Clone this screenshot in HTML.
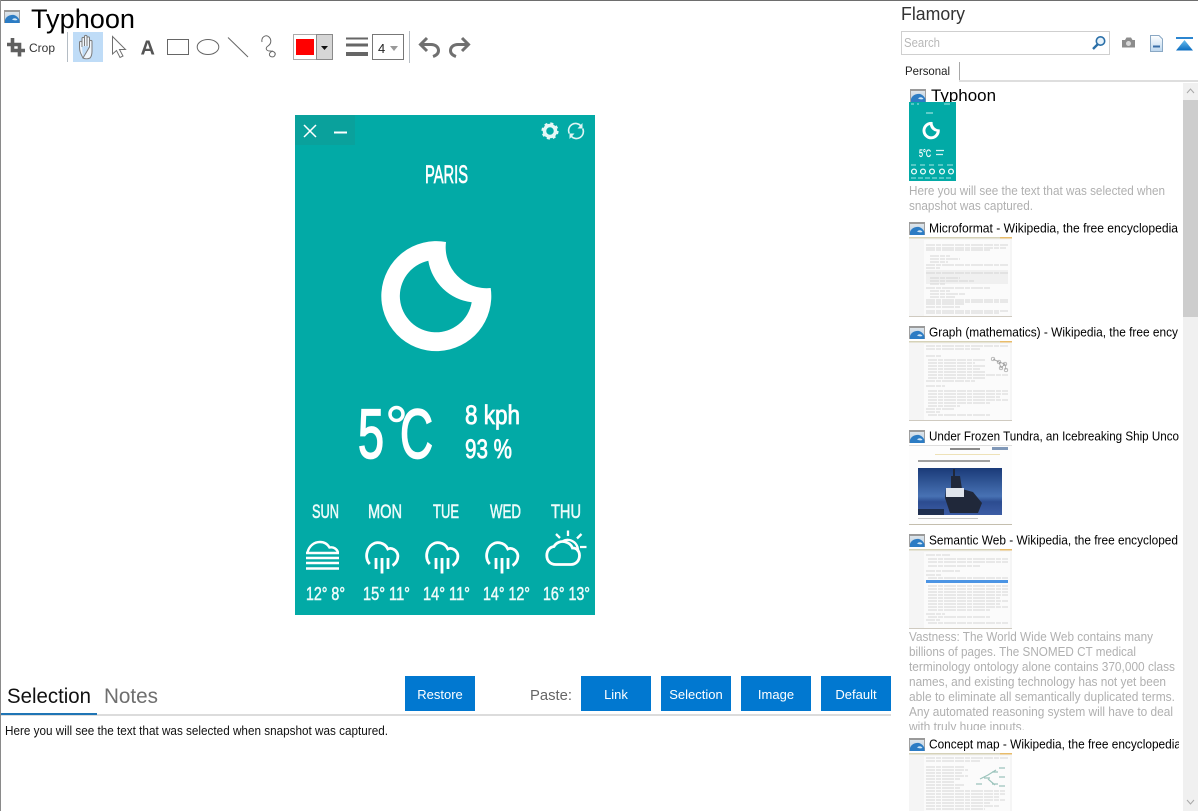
<!DOCTYPE html>
<html lang="en">
<head>
<meta charset="utf-8">
<title>Typhoon - Flamory</title>
<style>
html,body{margin:0;padding:0;background:#fff;width:1198px;height:811px;overflow:hidden}
svg{display:block;font-family:"Liberation Sans",sans-serif}
</style>
</head>
<body>
<svg xmlns="http://www.w3.org/2000/svg" width="1198" height="811" viewBox="0 0 1198 811">
<defs>
  <linearGradient id="gb" x1="0" y1="0" x2="0" y2="1"><stop offset="0" stop-color="#e4e8ec"/><stop offset="1" stop-color="#b4cde2"/></linearGradient>
  <linearGradient id="sea" x1="0" y1="0" x2="0" y2="1"><stop offset="0" stop-color="#1a3a78"/><stop offset=".6" stop-color="#4872b4"/><stop offset=".72" stop-color="#2c4c90"/><stop offset="1" stop-color="#3c5ca4"/></linearGradient>
  <linearGradient id="tri" x1="0" y1="0" x2="0" y2="1"><stop offset="0" stop-color="#6cc0f0"/><stop offset="1" stop-color="#0a6cc0"/></linearGradient>
  <linearGradient id="doc" x1="0" y1="0" x2="0" y2="1"><stop offset="0" stop-color="#fff"/><stop offset="1" stop-color="#bcd6ee"/></linearGradient>
  <g id="ico">
    <rect x=".5" y=".5" width="15" height="12" fill="url(#gb)" stroke="#a0a0a0"/>
    <rect x="0" y="0" width="16" height="2" fill="#9a9a9a"/>
    <path d="M1 13V10C2 6.500 6 4.500 10 5C12 5.500 14 7 15.500 10V13Z" fill="#2c7cc4"/>
    <path d="M8 9.500C10 7.500 12.500 8 13.500 10C11.500 10.500 10 10.500 8 9.500Z" fill="#cfe6f6"/>
  </g>
  <g id="rain" fill="none" stroke="#fff" stroke-width="2.800">
    <path d="M369.800 564C366.800 561 365.800 556 367.300 551.500C369 545.500 374.500 541.800 379.500 542.800C384 543.500 386.500 546 387.800 549C392 547 397 550.500 397.800 555C398.300 559.500 396 563.500 392.500 565.500"/>
    <path d="M376 558V569M382 558V573.500M388 558V569"/>
  </g>
  <clipPath id="cp1"><rect x="909" y="85" width="270" height="726"/></clipPath>
  <clipPath id="cp2"><rect x="905" y="620" width="278" height="110"/></clipPath>
</defs>

<!-- window frame -->
<rect x="0" y="0" width="1198" height="1" fill="#6e6e6e"/>
<rect x="0" y="0" width="1" height="811" fill="#8a8a8a"/>

<!-- title -->
<use href="#ico" x="4" y="10"/>
<text x="31" y="28" font-size="27" fill="#000" textLength="104" lengthAdjust="spacingAndGlyphs">Typhoon</text>

<!-- toolbar -->
<path d="M12.500 38V50.500H25M7 44.500H19.500V56.500" fill="none" stroke="#5f5f5f" stroke-width="3.600"/>
<text x="29" y="52" font-size="12" fill="#333" textLength="26" lengthAdjust="spacingAndGlyphs">Crop</text>
<rect x="67" y="32" width="1" height="30" fill="#b4bcc4"/>
<rect x="73" y="32" width="30" height="30" fill="#bfdcf7"/>
<path d="M83 58C81 54 79.500 52 79.500 47V42.500C79.500 41 82 41 82 42.500V47M82 47V38.500C82 37 84.500 37 84.500 38.500V46M84.500 46V36.500C84.500 35 87 35 87 36.500V46M87 46V38C87 36.500 89.500 36.500 89.500 38V47M89.500 47V41.500C89.500 40 92 40 92 41.500V51C92 55 91 57 90 58C88 59 85 59 83 58Z" fill="#f0f6fc" stroke="#7c7c7c" stroke-width="1"/>
<path d="M112.500 36.500V54L116.500 50.500L120 57.500L123 56L119.500 49.500H125.500Z" fill="#fff" stroke="#707070" stroke-width="1"/>
<text x="140.500" y="54.500" font-size="20" font-weight="bold" fill="#555">A</text>
<rect x="167.500" y="39.500" width="21" height="15" fill="#fff" stroke="#666"/>
<ellipse cx="208" cy="47" rx="10.800" ry="7.500" fill="#fff" stroke="#666"/>
<path d="M228 37.500L248 57" stroke="#666" stroke-width="1" fill="none"/>
<path d="M262 42C261 37 266 34 269 37C272 40 271 44 268 46C265 48 266 51 270 51C274 51 276 53 275 55C274 58 270 57 269.500 55C269 53 271 51.500 273 51" fill="none" stroke="#666" stroke-width="1"/>

<rect x="293.500" y="34.500" width="23" height="25" fill="#fff" stroke="#aaa"/>
<rect x="296" y="39" width="18" height="16" fill="#f00"/>
<rect x="316.500" y="34.500" width="16" height="25" fill="#d6d6d6" stroke="#8a8a8a"/>
<path d="M321 46H328L324.500 50Z" fill="#111"/>

<rect x="346" y="37.500" width="22" height="2" fill="#666"/>
<rect x="346" y="43.500" width="22" height="3" fill="#666"/>
<rect x="346" y="52" width="22" height="4" fill="#666"/>
<rect x="372.500" y="34.500" width="31" height="25" fill="#fff" stroke="#777"/>
<text x="378" y="53" font-size="13" fill="#222">4</text>
<path d="M390 46H398L394 51Z" fill="#999"/>
<rect x="409" y="31" width="1" height="32" fill="#b8bec4"/>
<g fill="none" stroke="#707070" stroke-width="3">
  <path d="M427 38L420.500 44.500L427 51"/>
  <path d="M421 44.500H431C436 44.500 438.500 47.500 438.500 50.500C438.500 53.500 436 55.500 433 56.500"/>
  <path d="M462 38L468.500 44.500L462 51"/>
  <path d="M468 44.500H458C453 44.500 450.500 47.500 450.500 50.500C450.500 53.500 453 55.500 456 56.500"/>
</g>

<!-- weather app -->
<rect x="295" y="115" width="300" height="500" fill="#02aaa6"/>
<rect x="295" y="115" width="60" height="30" fill="#0aa19c"/>
<path d="M304 125L316 137M316 125L304 137" stroke="#fff" stroke-width="1.500" fill="none"/>
<rect x="334" y="131.500" width="13" height="2" fill="#fff"/>
<circle cx="550" cy="131" r="5.500" fill="none" stroke="#e4f7f6" stroke-width="3.500"/>
<circle cx="550" cy="131" r="7.500" fill="none" stroke="#e4f7f6" stroke-width="2.200" stroke-dasharray="3 2.900"/>
<g fill="none" stroke="#dff5f4" stroke-width="1.600">
  <path d="M569.300 133.500A7 7 0 0 1 581 126"/>
  <path d="M582.700 128.500A7 7 0 0 1 571 136"/>
</g>
<path d="M582.500 123V128.500H577.500ZM569.500 139V133.500H574.500Z" fill="#dff5f4"/>

<text x="425" y="183" font-size="25" fill="#fff" textLength="43" lengthAdjust="spacingAndGlyphs" stroke="#fff" stroke-width=".7">PARIS</text>

<path d="M446 242A55 55 0 1 0 490.700 288A41 41 0 0 1 446 242Z" fill="#fff"/>
<path d="M428.300 260.700A36.200 36.200 0 1 0 471.700 302.300A50 50 0 0 1 428.300 260.700Z" fill="#02aaa6"/>

<g fill="#fff" stroke="#fff">
<text x="358" y="458" font-size="70" textLength="26" lengthAdjust="spacingAndGlyphs" stroke-width="1.800">5</text>
<circle cx="396.500" cy="414" r="6.500" fill="none" stroke-width="3.500"/>
<text x="400" y="458" font-size="70" textLength="33" lengthAdjust="spacingAndGlyphs" stroke-width="1.800">C</text>
<text x="465" y="424" font-size="27" textLength="55" lengthAdjust="spacingAndGlyphs" stroke-width=".8">8 kph</text>
<text x="465" y="458" font-size="27" textLength="47" lengthAdjust="spacingAndGlyphs" stroke-width=".8">93 %</text>
</g>
<g fill="#eefbfa" stroke="#eefbfa" stroke-width=".55" font-size="19">
<text x="312" y="518" textLength="27" lengthAdjust="spacingAndGlyphs">SUN</text>
<text x="368" y="518" textLength="34" lengthAdjust="spacingAndGlyphs">MON</text>
<text x="433" y="518" textLength="26" lengthAdjust="spacingAndGlyphs">TUE</text>
<text x="490" y="518" textLength="31" lengthAdjust="spacingAndGlyphs">WED</text>
<text x="551" y="518" textLength="30" lengthAdjust="spacingAndGlyphs">THU</text>
</g>
<g fill="#eefbfa" stroke="#eefbfa" stroke-width=".5" font-size="18">
<text x="306" y="600" textLength="39" lengthAdjust="spacingAndGlyphs">12° 8°</text>
<text x="363" y="600" textLength="47" lengthAdjust="spacingAndGlyphs">15° 11°</text>
<text x="423" y="600" textLength="47" lengthAdjust="spacingAndGlyphs">14° 11°</text>
<text x="483" y="600" textLength="47" lengthAdjust="spacingAndGlyphs">14° 12°</text>
<text x="543" y="600" textLength="47" lengthAdjust="spacingAndGlyphs">16° 13°</text>
</g>
<!-- fog -->
<g fill="none" stroke="#fff" stroke-width="2.400">
  <path d="M307.500 552.500C309 546 314 542 320 542C324 542 327.500 544 329.500 547.500C333.500 546.500 337 549 338 552.500"/>
  <path d="M306 553H339M306 558H339M306 563H339M306 568.500H339"/>
</g>
<use href="#rain"/>
<use href="#rain" x="60"/>
<use href="#rain" x="120"/>
<!-- sun & cloud -->
<g fill="none" stroke="#fff" stroke-width="2.800">
  <path d="M556 564.500C549.500 564.500 546.800 560 546.800 555.500C546.800 550.500 550 547 554 546.500C556 542.500 561 540.800 565 541.800C569 542.800 571.500 545 572.500 548C576.500 547.800 579.500 551 579.500 555.500C579.500 560.500 576 564.500 571 564.500Z"/>
  <path d="M563 541C567 538.800 572 539.800 575.500 543.500C577.500 546 578.300 549 578 552" stroke-width="2.300"/>
  <path d="M568 530.500V536M556 534L560 538M581.500 534L577 538.500M580 547H586.500" stroke-width="2.300"/>
</g>

<!-- bottom tabs -->
<text x="7" y="703" font-size="21" fill="#111" textLength="84" lengthAdjust="spacingAndGlyphs">Selection</text>
<text x="104" y="703" font-size="21" fill="#6f6f6f" textLength="54" lengthAdjust="spacingAndGlyphs">Notes</text>
<rect x="1" y="714" width="890" height="2" fill="#dcdcdc"/>
<rect x="1" y="713" width="96" height="2" fill="#1f75b5"/>
<text x="5" y="735" font-size="12.500" fill="#111" textLength="383" lengthAdjust="spacingAndGlyphs">Here you will see the text that was selected when snapshot was captured.</text>

<!-- buttons -->
<g fill="#0178d0">
<rect x="405" y="676" width="70" height="35"/>
<rect x="581" y="676" width="70" height="35"/>
<rect x="661" y="676" width="70" height="35"/>
<rect x="741" y="676" width="70" height="35"/>
<rect x="821" y="676" width="70" height="35"/>
</g>
<g fill="#fff" font-size="13" text-anchor="middle">
<text x="440" y="699">Restore</text>
<text x="616" y="699">Link</text>
<text x="696" y="699">Selection</text>
<text x="776" y="699">Image</text>
<text x="856" y="699">Default</text>
</g>
<text x="530" y="700" font-size="14.500" fill="#666" textLength="42" lengthAdjust="spacingAndGlyphs">Paste:</text>

<!-- sidebar header -->
<text x="901" y="20" font-size="18" fill="#333" textLength="64" lengthAdjust="spacingAndGlyphs">Flamory</text>
<rect x="901.500" y="31.500" width="208" height="23" fill="#fff" stroke="#cfcfcf"/>
<text x="904" y="47" font-size="12.500" fill="#b8b8b8" textLength="36" lengthAdjust="spacingAndGlyphs">Search</text>
<circle cx="1100.500" cy="41" r="4.200" fill="#e6f2fb" stroke="#2a6fa8" stroke-width="1.600"/>
<path d="M1097.500 44.500L1093 49" stroke="#2a6fa8" stroke-width="2.400" fill="none"/>
<path d="M1122 40H1125L1126.500 37.500H1131L1132.500 40H1135V47.500H1122Z" fill="#8c8c8c"/>
<circle cx="1128.500" cy="43.500" r="2.500" fill="#d8d8d8"/>
<path d="M1150.500 35.500H1159L1162.500 39V51.500H1150.500Z" fill="url(#doc)" stroke="#8aa8c4"/>
<rect x="1153" y="45.500" width="7" height="2" fill="#3a6ea8"/>
<rect x="1176" y="37" width="17" height="2" fill="#2c86d0"/>
<path d="M1184.500 40L1176 50.500H1193Z" fill="url(#tri)"/>

<!-- sidebar tab -->
<text x="905" y="75" font-size="12" fill="#222" textLength="45" lengthAdjust="spacingAndGlyphs">Personal</text>
<rect x="959" y="62" width="1" height="19" fill="#a8a8a8"/>
<rect x="959" y="80" width="239" height="2" fill="#dedede"/>

<!-- scrollbar -->
<rect x="1183" y="83" width="15" height="728" fill="#f0f0f0"/>
<rect x="1183" y="100" width="15" height="217" fill="#cdcdcd"/>
<path d="M1187 93L1190.500 89L1194 93M1187 800L1190.500 804L1194 800" fill="none" stroke="#a8a8a8" stroke-width="1"/>

<!-- list -->
<g clip-path="url(#cp1)">
  <text x="931" y="101" font-size="17" fill="#000" textLength="65" lengthAdjust="spacingAndGlyphs">Typhoon</text>
  <g fill="#000" font-size="12.500">
    <text x="929" y="232.500" textLength="249" lengthAdjust="spacingAndGlyphs">Microformat - Wikipedia, the free encyclopedia</text>
    <text x="929" y="336.500" textLength="249" lengthAdjust="spacingAndGlyphs">Graph (mathematics) - Wikipedia, the free ency</text>
    <text x="929" y="440.500" textLength="250" lengthAdjust="spacingAndGlyphs">Under Frozen Tundra, an Icebreaking Ship Unco</text>
    <text x="929" y="544.500" textLength="249" lengthAdjust="spacingAndGlyphs">Semantic Web - Wikipedia, the free encycloped</text>
    <text x="929" y="748.500" textLength="252" lengthAdjust="spacingAndGlyphs">Concept map - Wikipedia, the free encyclopedia</text>
  </g>
</g>
<use href="#ico" x="910" y="89"/>
<use href="#ico" x="909" y="222"/>
<use href="#ico" x="909" y="326"/>
<use href="#ico" x="909" y="430"/>
<use href="#ico" x="909" y="534"/>
<use href="#ico" x="909" y="738"/>

<!-- mini weather thumb -->
<rect x="909" y="102" width="47" height="79" fill="#02aaa6"/>
<g transform="translate(909,102) scale(.1567,.158) translate(-295,-115)">
  <path d="M446 242A55 55 0 1 0 490.700 288A41 41 0 0 1 446 242Z" fill="#fff"/>
  <path d="M428.300 260.700A36.200 36.200 0 1 0 471.700 302.300A50 50 0 0 1 428.300 260.700Z" fill="#02aaa6"/>
</g>
<text x="919" y="157" font-size="11" fill="#fff" stroke="#fff" stroke-width=".3" textLength="12" lengthAdjust="spacingAndGlyphs">5°C</text>
<path d="M936 150.500H944M936 154.500H943" stroke="#d5f3f2" stroke-width="1.200"/>
<path d="M926 113H933" stroke="#bdeeec" stroke-width="1"/>
<path d="M911 104H914M917 104H919M944 104H950M911 165H916M920 165H925M929 165H934M938 165H943M947 165H953" stroke="#a8e6e4" stroke-width="1"/>
<g fill="none" stroke="#eefbfa" stroke-width="1.300"><circle cx="914" cy="171.500" r="2.400"/><circle cx="923" cy="171.500" r="2.400"/><circle cx="932" cy="171.500" r="2.400"/><circle cx="942" cy="171.500" r="2.400"/><circle cx="951" cy="171.500" r="2.400"/></g>
<path d="M911 178H953" stroke="#9fe3e1" stroke-width="1" stroke-dasharray="5 2"/>

<!-- Microformat thumb -->
<g>
  <rect x="909" y="237" width="103" height="80" fill="#f5f5f5"/>
  <rect x="924" y="240" width="86" height="76" fill="#fbfbfb"/>
  <rect x="909" y="237" width="103" height="1.500" fill="#d6d2b8"/>
  <rect x="1000" y="237" width="12" height="1.500" fill="#e8bc6a"/>
  <rect x="909" y="316" width="103" height="1" fill="#cfcac0"/>
  <rect x="926" y="270" width="82" height="14" fill="#f0f0f0"/>
  <g stroke="#c9c9c9" stroke-width=".8" fill="none" stroke-dasharray="9 1 5 1 12 1">
    <path d="M926 245H1008M926 248H1006M926 250H990M930 256H950M930 259H960M930 262H948M926 265H1008M926 268H940M926 273H1008M930 278H960M930 281H975M930 284H945M926 288H990M930 291H950M930 294H965M930 297H955M926 300H1008M926 302H1008M926 304H965M926 307H960M926 311H1008M926 313H1000"/>
  </g>
</g>

<!-- Graph thumb -->
<g>
  <rect x="909" y="341" width="103" height="80" fill="#f5f5f5"/>
  <rect x="924" y="344" width="86" height="76" fill="#fbfbfb"/>
  <rect x="909" y="341" width="103" height="1.500" fill="#d6d2b8"/>
  <rect x="1000" y="341" width="12" height="1.500" fill="#e8bc6a"/>
  <rect x="909" y="420" width="103" height="1" fill="#cfcac0"/>
  <g stroke="#c9c9c9" stroke-width=".8" fill="none" stroke-dasharray="9 1 5 1 12 1">
    <path d="M926 346H1008M926 349H980M926 356H942M928 360H985M928 363H975M928 366H985M928 369H980M928 372H985M928 375H1008M928 378H985M926 381H975M926 386H945M928 391H1008M928 394H1008M928 397H1000M928 400H1008M928 403H990M928 406H960M926 409H955M926 412H940M928 415H990"/>
  </g>
  <g fill="none" stroke="#9a9a9a" stroke-width=".7">
    <circle cx="993" cy="359" r="1.800"/><circle cx="999" cy="362" r="1.800"/><circle cx="1005" cy="364" r="1.800"/><circle cx="1001" cy="368" r="1.800"/><circle cx="1006" cy="370" r="1.800"/>
    <path d="M993 359L999 362L1005 364L1001 368L999 362M1005 364L1006 370"/>
  </g>
</g>

<!-- Frozen thumb -->
<g>
  <rect x="909" y="445" width="103" height="80" fill="#fdfdfd"/>
  <path d="M909 445.500H1012" stroke="#dedede"/>
  <rect x="950" y="448" width="30" height="2" fill="#8a8a8a"/>
  <rect x="992" y="447" width="16" height="3" fill="#8098b8"/>
  <rect x="935" y="454" width="65" height="1" fill="#eee2b8"/>
  <rect x="918" y="460" width="72" height="2" fill="#a0a0a0"/>
  <rect x="918" y="468" width="84" height="47" fill="url(#sea)"/>
  <path d="M945 498L946 488H951V476H953V469H955V476H960L962 489L973 492L982 503L978 513H950Z" fill="#20283a"/>
  <path d="M946 488H964V497H946Z" fill="#dfe4ec"/>
  <rect x="918" y="509" width="26" height="6" fill="#141c2c" opacity=".7"/>
  <rect x="918" y="518" width="60" height="1" fill="#c4c4c4"/>
  <rect x="909" y="524" width="103" height="1" fill="#c4beae"/>
</g>

<!-- Semantic thumb -->
<g>
  <rect x="909" y="549" width="103" height="80" fill="#f5f5f5"/>
  <rect x="924" y="552" width="86" height="76" fill="#fbfbfb"/>
  <rect x="909" y="549" width="103" height="1.500" fill="#d6d2b8"/>
  <rect x="1000" y="549" width="12" height="1.500" fill="#e8bc6a"/>
  <rect x="909" y="628" width="103" height="1" fill="#cfcac0"/>
  <g stroke="#c9c9c9" stroke-width=".8" fill="none" stroke-dasharray="9 1 5 1 12 1">
    <path d="M926 555H950M928 559H1008M928 562H1008M928 566H980M926 571H960M926 575H942M928 578H1008M928 586H1008M928 589H1008M928 592H1008M928 595H1008M928 598H1000M928 601H1008M928 604H1000M928 607H1008M928 610H990M926 614H945M928 617H990M926 620H940M928 623H1008"/>
  </g>
  <rect x="926" y="580" width="82" height="3" fill="#4b94e4"/>
</g>

<!-- paragraph -->
<g clip-path="url(#cp2)" fill="#b0b0b0" font-size="12.500">
  <text x="909" y="641" textLength="244" lengthAdjust="spacingAndGlyphs">Vastness: The World Wide Web contains many</text>
  <text x="909" y="656" textLength="227" lengthAdjust="spacingAndGlyphs">billions of pages. The SNOMED CT medical</text>
  <text x="909" y="671" textLength="266" lengthAdjust="spacingAndGlyphs">terminology ontology alone contains 370,000 class</text>
  <text x="909" y="686" textLength="257" lengthAdjust="spacingAndGlyphs">names, and existing technology has not yet been</text>
  <text x="909" y="701" textLength="266" lengthAdjust="spacingAndGlyphs">able to eliminate all semantically duplicated terms.</text>
  <text x="909" y="716" textLength="264" lengthAdjust="spacingAndGlyphs">Any automated reasoning system will have to deal</text>
  <text x="909" y="731" textLength="116" lengthAdjust="spacingAndGlyphs">with truly huge inputs.</text>
</g>
<g fill="#b0b0b0" font-size="12.500">
  <text x="909" y="195" textLength="256" lengthAdjust="spacingAndGlyphs">Here you will see the text that was selected when</text>
  <text x="909" y="210" textLength="124" lengthAdjust="spacingAndGlyphs">snapshot was captured.</text>
</g>

<!-- Concept thumb -->
<g>
  <rect x="909" y="753" width="103" height="58" fill="#f5f5f5"/>
  <rect x="924" y="756" width="86" height="55" fill="#fbfbfb"/>
  <rect x="909" y="753" width="103" height="1.500" fill="#d6d2b8"/>
  <rect x="1000" y="753" width="12" height="1.500" fill="#e8bc6a"/>
  <g stroke="#c9c9c9" stroke-width=".8" fill="none" stroke-dasharray="9 1 5 1 12 1">
    <path d="M926 758H1008M926 761H980M926 767H965M926 770H968M926 773H962M926 776H968M926 779H960M926 782H955M926 785H965M926 788H960M926 791H1005M926 794H1005M926 797H1000M926 800H1005M926 803H990M926 806H1000M926 809H985"/>
  </g>
  <g stroke="#9cc4bc" stroke-width="1.200" fill="none">
    <path d="M976 784H982M984 778H990M992 772H998M999 768H1005M999 777H1005M992 784H998M999 786H1005M980 779L988 775L996 770M988 779L995 785"/>
  </g>
</g>
</svg>
</body>
</html>
